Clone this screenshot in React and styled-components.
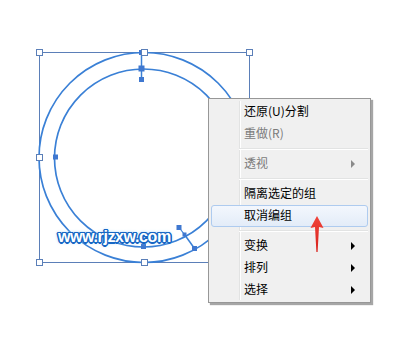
import React from "react";
import styled, { createGlobalStyle } from "styled-components";

const Global = createGlobalStyle`
  html, body { margin: 0; padding: 0; background: #ffffff; }
  body { font-family: "Noto Sans CJK SC", "Noto Sans", sans-serif; }
`;

const Stage = styled.div`
  position: relative;
  width: 398px;
  height: 350px;
  overflow: hidden;
  background: #ffffff;
`;

const Canvas = styled.svg`
  position: absolute;
  left: 0;
  top: 0;
`;

const Watermark = styled.div`
  position: absolute;
  left: 58px;
  top: 228px;
  font-family: "Liberation Sans", Arial, sans-serif;
  font-weight: 700;
  font-size: 16px;
  letter-spacing: -0.4px;
  color: #ffffff;
  text-shadow:
    1px 0 0 #1767c4, -1px 0 0 #1767c4, 0 1px 0 #1767c4, 0 -1px 0 #1767c4,
    1px 1px 0 #1767c4, -1px -1px 0 #1767c4, 1px -1px 0 #1767c4, -1px 1px 0 #1767c4,
    1.5px 0 0 #1767c4, -1.5px 0 0 #1767c4, 0 1.5px 0 #1767c4, 0 -1.5px 0 #1767c4,
    0 0 3px #6fb2f0, 0 0 4px #9fcdf5;
`;

const Menu = styled.div`
  position: absolute;
  left: 208px;
  top: 98px;
  width: 161px;
  padding: 2px 0 1px;
  background: #f0f0f0;
  border: 1px solid #979797;
  box-shadow: 2px 2px 1px rgba(0, 0, 0, 0.35);
  font-family: "Noto Sans CJK SC", "Noto Sans", sans-serif;
  font-size: 12px;
  &::before {
    content: "";
    position: absolute;
    left: 30px;
    top: 2px;
    bottom: 2px;
    width: 1px;
    background: #e2e3e3;
    box-shadow: 1px 0 0 #ffffff;
  }
`;

const Item = styled.div`
  position: relative;
  display: flex;
  align-items: center;
  justify-content: space-between;
  height: 22px;
  margin: 0 2px;
  padding: 0 12px 2px 32px;
  box-sizing: border-box;
  border: 1px solid ${(p) => (p.$active ? "#aecbef" : "transparent")};
  border-radius: 3px;
  background: ${(p) =>
    p.$active ? "linear-gradient(#f3f7fd, #e3ecf8)" : "transparent"};
  color: ${(p) => (p.$disabled ? "#7b7b7b" : "#000000")};
  line-height: 18px;
  z-index: 1;
`;

const Label = styled.span`
  white-space: nowrap;
`;

const Arrow = styled.span`
  width: 0;
  height: 0;
  margin-top: 2px;
  border-top: 4px solid transparent;
  border-bottom: 4px solid transparent;
  border-left: 4px solid ${(p) => (p.$disabled ? "#8a8a8a" : "#000000")};
`;

const Sep = styled.div`
  position: relative;
  height: 8px;
  margin-left: 30px;
  margin-right: 2px;
  &::after {
    content: "";
    position: absolute;
    left: 0;
    right: 0;
    top: 3px;
    height: 1px;
    background: #e2e3e3;
    box-shadow: 0 1px 0 #ffffff;
  }
`;

const Pointer = styled.svg`
  position: absolute;
  left: 305px;
  top: 212px;
  z-index: 5;
`;

const items = [
  { label: "还原(U)分割" },
  { label: "重做(R)", disabled: true },
  "sep",
  { label: "透视", disabled: true, sub: true },
  "sep",
  { label: "隔离选定的组" },
  { label: "取消编组", active: true },
  "sep",
  { label: "变换", sub: true },
  { label: "排列", sub: true },
  { label: "选择", sub: true },
];

const BLUE = "#3a80d6";
const BOX = "#5b7fb8";

function Hollow({ x, y }) {
  return (
    <rect x={x - 3} y={y - 3} width={6} height={6} fill="#ffffff" stroke={BOX} strokeWidth={1} />
  );
}
function Filled({ x, y, s = 5 }) {
  return <rect x={x - s / 2} y={y - s / 2} width={s} height={s} fill="#3f78d0" />;
}

export default function App() {
  return (
    <>
      <Global />
      <Stage>
        <Canvas width={398} height={350} viewBox="0 0 398 350">
          <rect x={39.5} y={52.5} width={210} height={210} fill="none" stroke={BOX} strokeWidth={1} />
          <circle cx={144} cy={157.5} r={105} fill="none" stroke={BLUE} strokeWidth={1.7} />
          <circle cx={143.5} cy={158} r={89} fill="none" stroke={BLUE} strokeWidth={1.7} />
          <line x1={141.5} y1={52} x2={141.5} y2={79} stroke={BLUE} strokeWidth={1.5} />
          <line x1={179} y1={227.5} x2={184.5} y2={234.5} stroke={BLUE} strokeWidth={1.2} />
          <line x1={184.5} y1={234.5} x2={194.5} y2={248.5} stroke={BLUE} strokeWidth={1.5} />
          <Filled x={141.5} y={52.5} />
          <Filled x={141.5} y={68.5} s={6} />
          <Filled x={141.5} y={79.5} />
          <Filled x={55.5} y={157} />
          <Filled x={143.5} y={246.5} />
          <Filled x={179} y={227.5} />
          <Filled x={184.5} y={234.5} s={4} />
          <Filled x={194.5} y={248.5} />
          <Hollow x={39.5} y={52.5} />
          <Hollow x={144.5} y={52.5} />
          <Hollow x={249.5} y={52.5} />
          <Hollow x={39.5} y={157.5} />
          <Hollow x={39.5} y={262.5} />
          <Hollow x={144.5} y={262.5} />
        </Canvas>
        <Watermark>www.rjzxw.com</Watermark>
        <Menu>
          {items.map((it, i) =>
            it === "sep" ? (
              <Sep key={i} />
            ) : (
              <Item key={i} $active={it.active} $disabled={it.disabled}>
                <Label>{it.label}</Label>
                {it.sub && <Arrow $disabled={it.disabled} />}
              </Item>
            )
          )}
        </Menu>
        <Pointer width={24} height={44} viewBox="0 0 24 44">
          <defs>
            <linearGradient id="rg" x1="0" y1="0" x2="0" y2="1">
              <stop offset="0" stopColor="#f0443a" />
              <stop offset="1" stopColor="#d8211b" />
            </linearGradient>
          </defs>
          <path
            d="M12 4 L18.5 16 L14 15 L12.6 40 L11.4 40 L10 15 L5.5 16 Z"
            fill="url(#rg)"
          />
        </Pointer>
      </Stage>
    </>
  );
}
